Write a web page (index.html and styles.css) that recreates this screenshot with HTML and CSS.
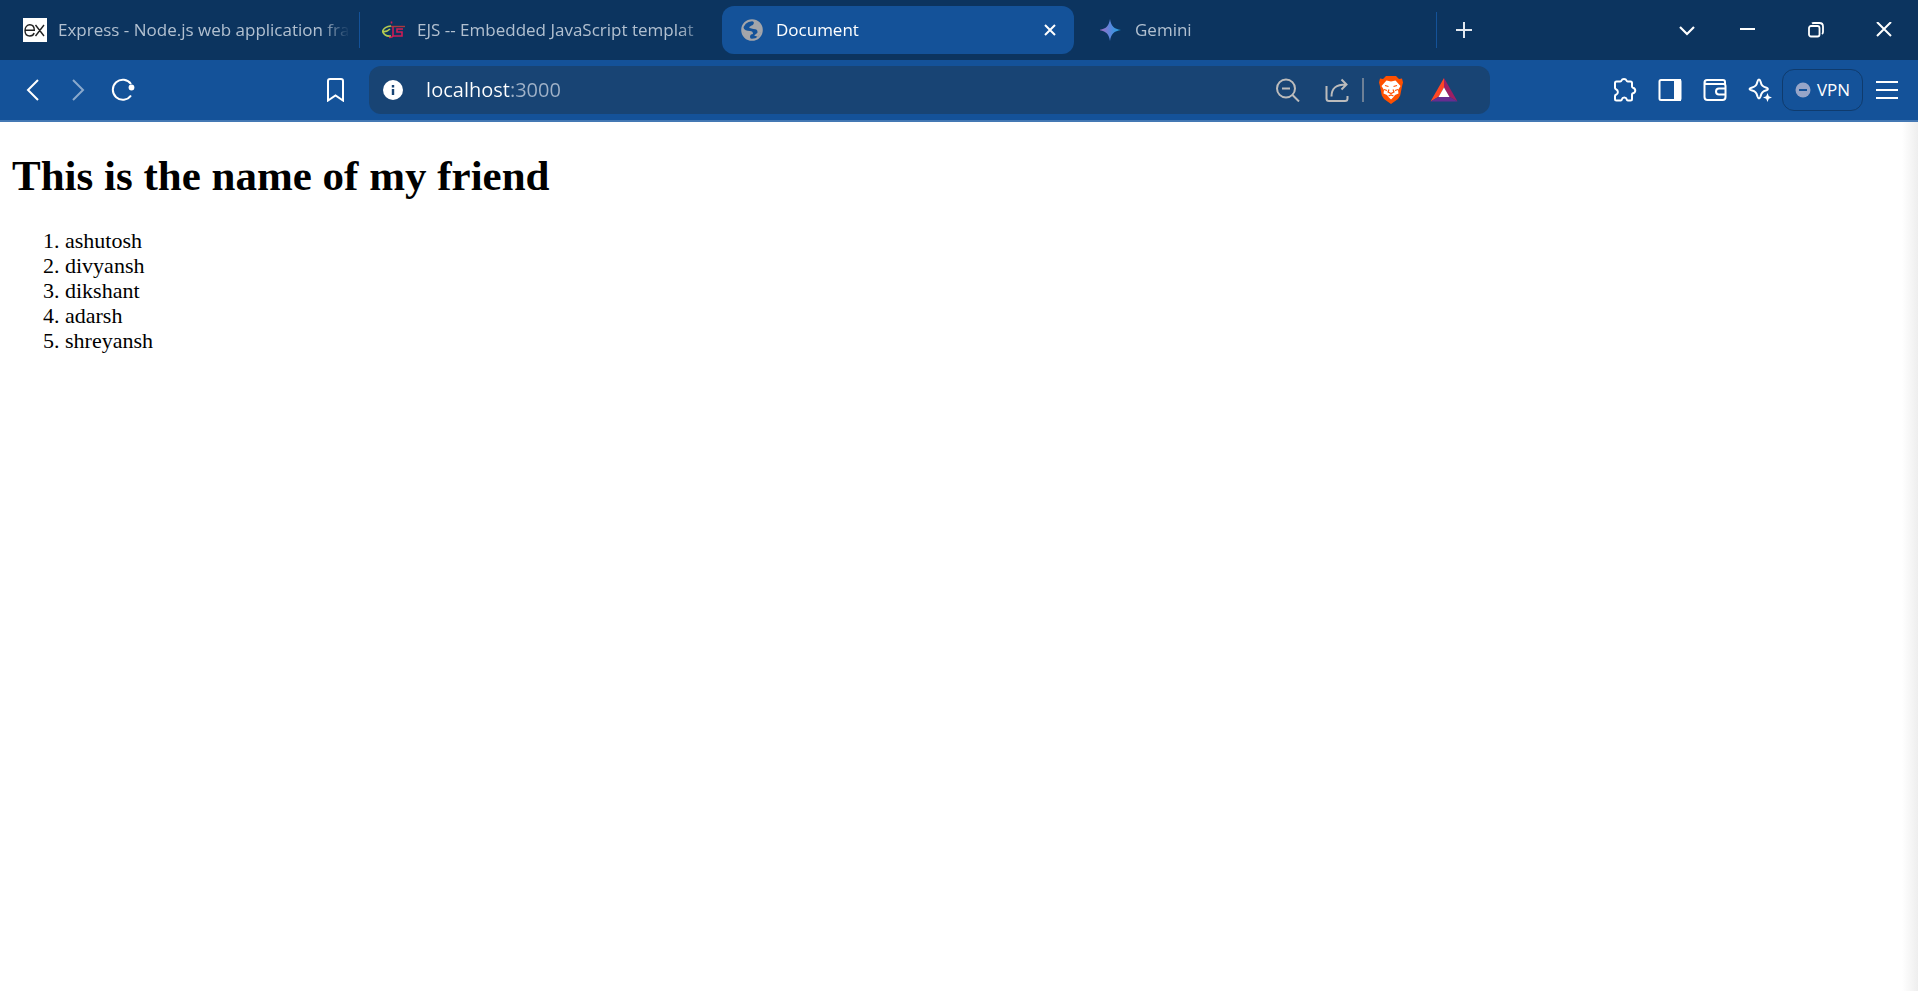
FILE: index.html
```html
<!DOCTYPE html>
<html lang="en">
<head>
<meta charset="utf-8">
<title>Document</title>
<link rel="stylesheet" href="styles.css">
</head>
<body>
<header class="chrome">
  <div class="titlebar">
    <nav class="tabs" aria-label="Tabs">
      <a class="tab" href="#express">
        <svg class="favicon" viewBox="0 0 24 24"><path fill="#fff" d="M0 0h24v24H0z"/><path fill="none" stroke="#222" stroke-width="1.4" d="M2 12.3h9.3C11.3 8.300 9.500 6.800 6.800 6.800S2 9 2 12.500 4 18 6.800 18c2.200 0 3.800-1 4.300-3M12.500 7l8.500 11M21 7l-8.500 11"/></svg>
        <span class="tab-title">Express - Node.js web application fra</span>
      </a>
      <span class="tab-sep"></span>
      <a class="tab" href="#ejs">
        <svg class="favicon" viewBox="0 0 24 24" fill="none"><path stroke="#b4ca50" stroke-width="1.600" d="M9 8C5 8 1 10.500.6 13.500c3 .5 5.400-.5 7.400-2.500M.6 13.500C2 17 5 18.500 9 18"/><path stroke="#cf1c55" stroke-width="1.600" d="M11 9v8.500c0 1.800-1.500 2-4 2M9.500 5.500v-2M21 11h-6v3h5v4h-8.500"/><path stroke="#a93a3f" stroke-width="1.400" d="M9 8.500h14"/></svg>
        <span class="tab-title">EJS -- Embedded JavaScript templat</span>
      </a>
      <span class="tab-sep clear"></span>
      <div class="tab active">
        <svg class="favicon" viewBox="0 0 24 24"><circle cx="11" cy="12" r="9.800" fill="none" stroke="#a3a5aa" stroke-width="2"/><path fill="#a3a5aa" d="M2 9c1 3 4 4 7 4 2 0 3 1 3 3-2 0-3 1-3 3l1 3C4 21 1 16 2 9zM11 2c5 0 8 3 9.500 6.500.8 4-1 8-4 10.500-1-1-1.500-1-3-1 0-2 3-2 3-4s-1-3-4-3c-2 0-2-1-4-1-1-2 3-2 4-4 1-1 0-3-1.500-4z"/></svg>
        <a class="tab-title" href="#document">Document</a>
        <button class="tab-close" aria-label="Close tab"><svg width="12" height="12" viewBox="0 0 12 12"><path d="M1 1l10 10M11 1L1 11" stroke="#fff" stroke-width="2"/></svg></button>
      </div>
      <span class="tab-sep clear"></span>
      <a class="tab" href="#gemini">
        <svg class="favicon" viewBox="0 0 24 24"><defs><linearGradient id="gem" x1="0" x2="1"><stop offset="0" stop-color="#a968bd"/><stop offset=".5" stop-color="#5b86dc"/><stop offset="1" stop-color="#18a5e0"/></linearGradient></defs><path fill="url(#gem)" d="M10 1c1 7 4 10 11 11-7 1-10 4-11 11-1-7-4-10-11-11 7-1 10-4 11-11z"/></svg>
        <span class="tab-title">Gemini</span>
      </a>
      <span class="tab-sep"></span>
      <button class="new-tab" aria-label="New tab"><svg width="16" height="16" viewBox="0 0 16 16"><path d="M8 0v16M0 8h16" stroke="#e3e8ef" stroke-width="2"/></svg></button>
    </nav>
    <div class="window-controls">
      <button class="search-tabs" aria-label="Search tabs"><svg width="16" height="16" viewBox="0 0 16 16" fill="none"><path d="M1 5l7 7 7-7" stroke="#fff" stroke-width="2.200"/></svg></button>
      <button aria-label="Minimise"><svg width="16" height="16" viewBox="0 0 16 16"><path d="M0 7h15" stroke="#fff" stroke-width="2"/></svg></button>
      <button aria-label="Restore"><svg width="16" height="16" viewBox="0 0 16 16" fill="none" stroke="#fff" stroke-width="1.800"><rect x="1" y="4" width="10.500" height="10.500" rx="2"/><path d="M4 1.500c.5-.5 1-.5 2-.5h5.500c2.500 0 3.500 1 3.500 3.500V10c0 1-.3 1.500-1 2"/></svg></button>
      <button aria-label="Close"><svg width="16" height="16" viewBox="0 0 16 16"><path d="M1 0l14 14M15 0L1 14" stroke="#fff" stroke-width="2"/></svg></button>
    </div>
  </div>

  <div class="toolbar">
    <div class="group">
      <button aria-label="Back"><svg viewBox="0 0 24 24"><path d="M17 2L7 12l10 10"/></svg></button>
      <button class="dim" aria-label="Forward"><svg viewBox="0 0 24 24"><path d="M7 2l10 10L7 22"/></svg></button>
      <button aria-label="Reload"><svg viewBox="0 0 24 24"><path d="M20 17.500A10 10 0 1 1 20 6"/><circle cx="20.500" cy="9.500" r="2.900" fill="#fff" stroke="none"/></svg></button>
    </div>
    <div class="group bookmark">
      <button aria-label="Bookmark this page"><svg viewBox="0 0 24 24"><path d="M4 3q0-2 2-2h11q2 0 2 2v19.500l-7.500-5L4 22.500z"/></svg></button>
    </div>
    <div class="omnibox">
      <button class="site-info" aria-label="Site information"><svg viewBox="0 0 24 24"><circle cx="12" cy="12" r="10" fill="#fff" stroke="none"/><path d="M12 7v2.500M12 11v6" stroke="#184474" stroke-width="2.400"/></svg></button>
      <input class="url" type="text" value="localhost:3000" aria-label="Address">
      <div class="omni-actions">
        <button aria-label="Zoom"><svg viewBox="0 0 24 24"><circle cx="10" cy="10.500" r="9"/><path d="M16.500 17l6.500 6.500M6 10.500h8"/></svg></button>
        <button aria-label="Share"><svg viewBox="0 0 24 24"><path d="M1.500 8v12.500q0 2.500 2.500 2.500h16q2.500 0 2.500-2.500V18M6.500 18.500C6.500 10 11 6.500 21 6.500M16.500 1.500l5 5-5 5"/></svg></button>
        <span class="divider"></span>
        <button aria-label="Brave Shields"><svg class="brand" viewBox="0 0 28 28"><path fill="#ff5000" d="M9 0h10l3 3 3-.5 1 4-.8 3-2 10-2.200 3.500L14 28l-7-5-2.200-3.500-2-10L2 6.500l1-4L6 3z"/><path fill="#fff" d="M9.500 4.500l4.500 1 4.500-1 5 5.500-2.500 4 .5 3.500-3.500 1.500-1.500 2-2.500 2.500-2.500-2.500-1.500-2-3.500-1.500.5-3.500L4.500 10z"/><path fill="none" stroke="#ff5000" stroke-width="1.200" d="M8 9.500l3.500 1M20 9.500l-3.500 1M12 13.500l-1 2.500 3 1.500 3-1.500-1-2.500M7 13.500l3 1M21 13.500l-3 1M11.500 20l2.500-1 2.500 1"/></svg></button>
        <button aria-label="Brave Rewards"><svg class="brand" viewBox="0 0 28 28"><path fill="#ff4724" d="M14 2L.5 25.500 9 20.500l5-9z"/><path fill="#9e1f63" d="M14 2v9.500l5 9 8.500 5z"/><path fill="#662d91" d="M.5 25.500L9 20.500h10l8.500 5z"/><path fill="#fff" d="M14 11.500l5.500 9.500h-11z"/></svg></button>
      </div>
    </div>
    <div class="group actions">
      <button aria-label="Extensions"><svg viewBox="0 0 24 24"><path d="M3.500 3.500h3.700q1 0 1.300-1c.8-2 4.200-2 5 0q.3 1 1.300 1h2.700q1.500 0 1.500 1.500v3.500q0 .8 1 1.200c3 1 3 4.600 0 5.600q-1 .4-1 1.200V21q0 1.500-1.500 1.500h-2.700q-.8 0-1-1c-.7-2.600-4.300-2.600-5 0q-.2 1-1 1H3.500Q2 22.500 2 21v-3q0-.8 1-1.200c2.500-1 2.500-4.600 0-5.600q-1-.4-1-1.200V5q0-1.500 1.500-1.500z" stroke-linejoin="round"/></svg></button>
      <button aria-label="Sidebar"><svg viewBox="0 0 24 24"><rect x="1.500" y="2" width="21" height="20" rx="1.500"/><path fill="#fff" d="M17 2h5v20h-5z"/></svg></button>
      <button aria-label="Wallet"><svg viewBox="0 0 24 24"><path d="M22 6V4q0-2-2-2H4Q1.500 2 1.500 4.500V19q0 3 3 3h15q3 0 3-3V8q0-2-2-2H4Q1.500 6 1.500 4M22.500 10.500H16q-3 0-3 3t3 3h6.500"/></svg></button>
      <button aria-label="Leo AI"><svg viewBox="0 0 24 24"><path d="M11 1.500q1 0 1.500 2c1 4 2 5 6 6.200q2.800 1.300 0 2.600c-4 1.200-5 2.200-6 6.200q-1.500 4-3 0c-1-4-2-5-6-6.200q-4-1.300 0-2.600c4-1.200 5-2.200 6-6.200q.5-2 1.500-2z"/><path fill="#fff" stroke="none" d="M19.500 15l1.300 3.200L24 19.500l-3.200 1.300-1.300 3.200-1.300-3.200-3.200-1.300 3.200-1.300z"/></svg></button>
      <button class="vpn"><svg viewBox="0 0 16 16"><circle cx="8" cy="8" r="7.500" fill="#97a5c8" stroke="none"/><path stroke="#145299" d="M4 8h8"/></svg>VPN</button>
      <button class="menu" aria-label="Menu"><svg viewBox="0 0 24 24"><path d="M1 4h22M1 12h22M1 20h22"/></svg></button>
    </div>
  </div>
</header>

<main class="page">
  <h1>This is the name of my friend</h1>
  <ol>
    <li>ashutosh</li>
    <li>divyansh</li>
    <li>dikshant</li>
    <li>adarsh</li>
    <li>shreyansh</li>
  </ol>
</main>
</body>
</html>
```

FILE: styles.css
```css
* { box-sizing: border-box; }

body {
  margin: 0;
  min-height: 100vh;
  display: flex;
  flex-direction: column;
  background: #fff;
}

.chrome {
  font: 17px/24px "Open Sans", "Noto Sans", sans-serif;
  color: #fff;
}

button {
  display: flex;
  align-items: center;
  justify-content: center;
  padding: 0;
  border: 0;
  background: none;
  color: inherit;
  font: inherit;
}

a { color: inherit; text-decoration: none; }

.titlebar {
  display: flex;
  height: 60px;
  background: #0c345f;
}

.tabs {
  flex: 1;
  min-width: 0;
  display: flex;
  align-items: center;
  gap: 3px;
  padding-left: 4px;
}

.tab {
  flex: 0 1 352px;
  min-width: 0;
  height: 48px;
  display: flex;
  align-items: center;
  gap: 11px;
  padding: 0 0 0 19px;
  border-radius: 12px;
  color: #b2c0d0;
}

.tab.active { padding-right: 18px; background: #145299; color: #fff; }

.favicon { flex: none; width: 24px; height: 24px; }

.tab-title {
  flex: 1;
  min-width: 0;
  overflow: hidden;
  white-space: nowrap;
  mask-image: linear-gradient(to right, #000 calc(100% - 36px), transparent calc(100% - 6px));
}

.tab-sep { width: 1px; height: 36px; background: #145299; }
.tab-sep.clear { background: none; }

.new-tab { width: 48px; height: 48px; }

.window-controls { display: flex; }
.window-controls button { width: 68px; }
.window-controls .search-tabs { width: 54px; }

.toolbar {
  display: grid;
  grid-template-columns: auto 3fr auto 20fr 2fr auto;
  align-items: center;
  height: 62px;
  padding: 0 7px 0 10px;
  background: #145299;
  border-bottom: 2px solid #4478b4;
}

.toolbar svg {
  width: 24px;
  height: 24px;
  fill: none;
  stroke: #fff;
  stroke-width: 2;
}

.group { display: flex; align-items: center; }
.group button { width: 45px; height: 42px; }
.group .dim { opacity: .5; }

.bookmark { grid-column: 3; padding-right: 11px; }

.omnibox {
  grid-column: 4;
  display: flex;
  align-items: center;
  height: 48px;
  padding: 0 32px 0 12px;
  border-radius: 12px;
  background: #184474;
}

.url {
  flex: 1;
  min-width: 0;
  margin-left: 21px;
  padding: 0;
  border: 0;
  font: 20px/28px "Open Sans", "Noto Sans", sans-serif;
  color: transparent;
  background: linear-gradient(to right, #fff 84px, #a0b2c8 84px);
  background-clip: text;
}

.omni-actions { display: flex; align-items: center; gap: 23px; }
.omni-actions svg { stroke: #bcbcbc; stroke-width: 2; }
.omni-actions svg.brand { width: 28px; height: 28px; stroke: none; }
.omni-actions button + button { margin-left: 2px; }
.omni-actions .divider { width: 2px; height: 24px; margin: 0 -10px; background: #6d8096; }

.actions { grid-column: 6; }

.group .vpn {
  width: 81px;
  gap: 6px;
  border: 1px solid #0f3b6d;
  border-radius: 12px;
}

.group .vpn svg { width: 16px; height: 16px; }
.group .menu { width: 48px; }

.page {
  flex: 1;
  padding: 0 12px;
  font: 22px/25px "Liberation Serif", "Times New Roman", serif;
  color: #000;
  background: linear-gradient(to left, #eee, #fff 16px);
}

.page h1 { margin: 29px 0 28px; font-size: 43px; line-height: 49px; }
.page ol { margin: 0; padding-left: 53px; }
```
